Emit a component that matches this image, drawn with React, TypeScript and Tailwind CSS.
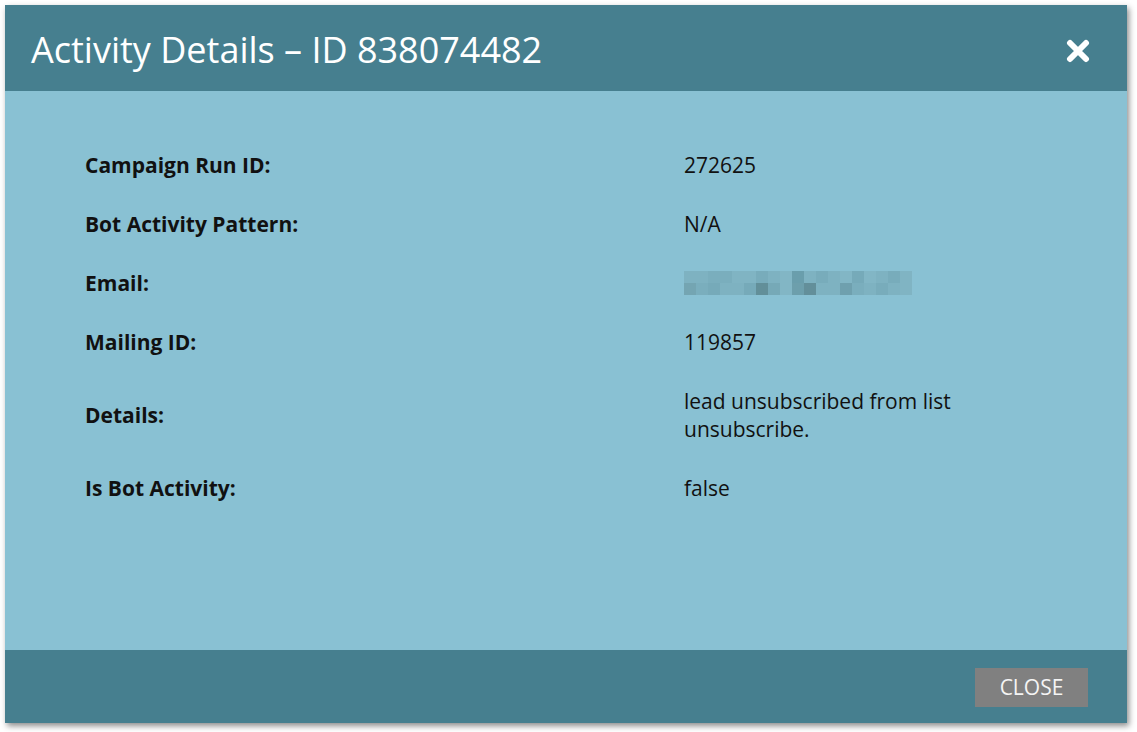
import React from "react";

const row1 = [
  "bg-[#7eb2c1]", "bg-[#7eb2c1]", "bg-[#7aaebd]", "bg-[#7aaebd]", "bg-[#80b4c3]", "bg-[#80b4c3]", "bg-[#78acbb]", "bg-[#7eb2c1]", "bg-[#82b6c5]", "bg-[#6a9eac]",
  "bg-[#7eb2c1]", "bg-[#78acbb]", "bg-[#7eb2c1]", "bg-[#82b6c5]", "bg-[#76aab9]", "bg-[#82b6c5]", "bg-[#7eb2c1]", "bg-[#78acbb]", "bg-[#80b4c3]",
];
const row2 = [
  "bg-[#74a5b2]", "bg-[#7aaebd]", "bg-[#76aab9]", "bg-[#7eb2c1]", "bg-[#7eb2c1]", "bg-[#76aab9]", "bg-[#628f99]", "bg-[#76a9b7]", "bg-[#82b6c5]", "bg-[#6d9fac]",
  "bg-[#638f9a]", "bg-[#7eb2c1]", "bg-[#7eb2c1]", "bg-[#6fa0ae]", "bg-[#7aaebd]", "bg-[#7eb2c1]", "bg-[#78acbb]", "bg-[#7eb2c1]", "bg-[#80b4c3]",
];

function Pixelated() {
  return (
    <div className="flex flex-col">
      <div className="flex">
        {row1.map((c, i) => (
          <div key={i} className={`w-[12px] h-[12px] ${c}`} />
        ))}
      </div>
      <div className="flex">
        {row2.map((c, i) => (
          <div key={i} className={`w-[12px] h-[12px] ${c}`} />
        ))}
      </div>
    </div>
  );
}

const rows: { label: string; value: React.ReactNode }[] = [
  { label: "Campaign Run ID:", value: "272625" },
  { label: "Bot Activity Pattern:", value: "N/A" },
  { label: "Email:", value: <Pixelated /> },
  { label: "Mailing ID:", value: "119857" },
  {
    label: "Details:",
    value: (
      <>
        lead unsubscribed from list
        <br />
        unsubscribe.
      </>
    ),
  },
  { label: "Is Bot Activity:", value: "false" },
];

export default function App() {
  return (
    <div className="w-[1137px] h-[732px] bg-white font-['Open_Sans',sans-serif]">
      <div className="pt-[5px] pl-[5px]">
        <div className="w-[1122px] h-[718px] flex flex-col shadow-[2px_3px_6px_rgba(0,0,0,0.45)]">
          <div className="h-[86px] bg-[#467f8f] flex items-center justify-between pl-[26px] pr-[37px] pt-[4px]">
            <h1 className="text-white text-[36px] leading-none">Activity Details – ID 838074482</h1>
            <svg width="24" height="24" viewBox="0 0 24 24" className="mt-[2px]">
              <path d="M4 4 L20 20 M20 4 L4 20" stroke="white" strokeWidth="6" strokeLinecap="round" />
            </svg>
          </div>
          <div className="flex-1 bg-[#89c1d3] pt-[60px] pl-[80px]">
            <div className="flex flex-col gap-[31px]">
              {rows.map((r, i) => (
                <div key={i} className="flex items-center text-[21px] leading-[28px] text-[#111]">
                  <div className="w-[599px] font-bold">{r.label}</div>
                  <div>{r.value}</div>
                </div>
              ))}
            </div>
          </div>
          <div className="h-[73px] bg-[#467f8f] flex items-start justify-end pt-[18px] pr-[39px]">
            <button className="w-[113px] h-[39px] bg-[#808080] text-[#f4f4f4] text-[21px] flex items-center justify-center">
              CLOSE
            </button>
          </div>
        </div>
      </div>
    </div>
  );
}
